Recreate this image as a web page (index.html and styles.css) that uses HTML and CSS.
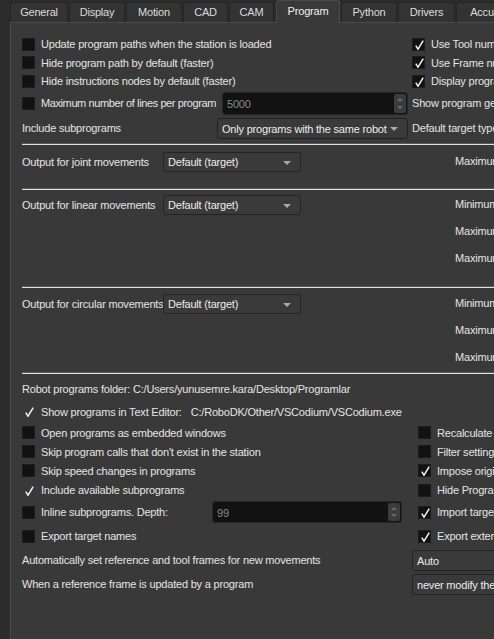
FILE: index.html
```html
<!DOCTYPE html>
<html lang="en">
<head>
    <meta charset="UTF-8">
    <title>Options - Program</title>
    <link rel="stylesheet" href="styles.css">
</head>
<body>
    <!-- tab strip -->
    <div class="tabs">
        <div class="tab" style="width:56px">General</div>
        <div class="tab" style="width:54px">Display</div>
        <div class="tab" style="width:54px">Motion</div>
        <div class="tab" style="width:43px">CAD</div>
        <div class="tab" style="width:43px">CAM</div>
        <div class="tab active" style="width:62px">Program</div>
        <div class="tab" style="width:54px">Python</div>
        <div class="tab" style="width:55px">Drivers</div>
        <div class="tab" style="width:70px">Accuracy</div>
    </div>

    <div class="pane">
        <!-- general program options -->
        <div class="top">
            <div class="cell"><span class="box"></span>Update program paths when the station is loaded</div>
            <div class="cell right"><span class="box on"></span>Use Tool numbers</div>
            <div class="cell"><span class="box"></span>Hide program path by default (faster)</div>
            <div class="cell right"><span class="box on"></span>Use Frame numbers</div>
            <div class="cell"><span class="box"></span>Hide instructions nodes by default (faster)</div>
            <div class="cell right"><span class="box on"></span>Display program</div>
            <div class="cell">
                <span class="box"></span><span class="tight">Maximum number of lines per program</span>
                <div class="spin spin-lines"><span>5000</span><i class="arrows"></i></div>
            </div>
            <div class="cell right">Show program generation</div>
            <div class="cell">
                Include subprograms
                <div class="combo combo-sub">Only programs with the same robot</div>
            </div>
            <div class="cell right">Default target type</div>
        </div>

        <div class="sep"></div>
        <div class="move joint">
            <div class="move-row">
                <span class="move-label">Output for joint movements</span>
                <div class="combo combo-move">Default (target)</div>
            </div>
            <div class="limits">
                <span>Maximum joint</span>
            </div>
        </div>

        <div class="sep"></div>
        <div class="move linear">
            <div class="move-row">
                <span class="move-label">Output for linear movements</span>
                <div class="combo combo-move">Default (target)</div>
            </div>
            <div class="limits">
                <span>Minimum step</span>
                <span>Maximum step</span>
                <span>Maximum angle</span>
            </div>
        </div>

        <div class="sep"></div>
        <div class="move circular">
            <div class="move-row">
                <span class="move-label">Output for circular movements</span>
                <div class="combo combo-move">Default (target)</div>
            </div>
            <div class="limits">
                <span>Minimum step</span>
                <span>Maximum step</span>
                <span>Maximum angle</span>
            </div>
        </div>

        <div class="sep"></div>
        <!-- program files -->
        <div class="line folder">Robot programs folder: C:/Users/yunusemre.kara/Desktop/Programlar</div>
        <div class="line editor">
            <span class="box on plain"></span>Show programs in Text Editor:
            <span class="editor-path">C:/RoboDK/Other/VSCodium/VSCodium.exe</span>
        </div>

        <div class="bottom">
            <div class="cell"><span class="box"></span>Open programs as embedded windows</div>
            <div class="cell right"><span class="box"></span>Recalculate Targets</div>
            <div class="cell"><span class="box"></span>Skip program calls that don't exist in the station</div>
            <div class="cell right"><span class="box"></span>Filter settings</div>
            <div class="cell"><span class="box"></span>Skip speed changes in programs</div>
            <div class="cell right"><span class="box on"></span>Impose original</div>
            <div class="cell"><span class="box on plain"></span>Include available subprograms</div>
            <div class="cell right"><span class="box"></span>Hide Program</div>
            <div class="cell">
                <span class="box"></span>Inline subprograms. Depth:
                <div class="spin spin-depth"><span>99</span><i class="arrows"></i></div>
            </div>
            <div class="cell right"><span class="box on"></span>Import targets</div>
            <div class="cell"><span class="box"></span>Export target names</div>
            <div class="cell right"><span class="box on"></span>Export external</div>
        </div>

        <div class="line frames">
            <span class="wide-label">Automatically set reference and tool frames for new movements</span>
            <div class="combo combo-wide">Auto</div>
        </div>
        <div class="line frames">
            <span class="wide-label">When a reference frame is updated by a program</span>
            <div class="combo combo-wide">never modify the reference</div>
        </div>
    </div>
</body>
</html>
```

FILE: styles.css
```css
body {
    margin: 0;
    width: 494px;
    height: 639px;
    overflow: hidden;
    background: #2c2c2c;
    color: #e4e4e4;
    font-family: 'Liberation Sans', Arial, sans-serif;
    font-size: 11px;
    letter-spacing: -0.2px;
}

/* tab strip */
.tabs {
    display: flex;
    align-items: flex-end;
    height: 22px;
    padding-left: 10px;
    white-space: nowrap;
}
.tab {
    flex: none;
    height: 19px;
    line-height: 19px;
    margin-right: 1px;
    text-align: center;
    background: #333333;
    border: 1px solid #252525;
    border-bottom: none;
    border-radius: 3px 3px 0 0;
    color: #dcdcdc;
}
.tab.active {
    height: 22px;
    line-height: 20px;
    margin: 0 1px -1px 1px;
    background: #393939;
    border-color: #4a4a4a;
    color: #f0f0f0;
    position: relative;
    z-index: 1;
}

.pane {
    margin-left: 10px;
    width: 600px;
    height: 620px;
    background: #393939;
    border-top: 1px solid #4a4a4a;
    border-left: 1px solid #4a4a4a;
    padding-left: 11px;
    white-space: nowrap;
}

.tight {
    letter-spacing: -0.4px;
}

/* checkboxes */
.box {
    flex: none;
    width: 13px;
    height: 13px;
    margin-right: 6px;
    background: #121212;
    border: 1px solid #1c1c1c;
    box-sizing: border-box;
    position: relative;
}
.box.plain {
    background: transparent;
    border-color: transparent;
}
.box.on:after {
    content: '';
    position: absolute;
    left: 2px;
    top: 1px;
    width: 9px;
    height: 10px;
    background: no-repeat center / 9px 10px url("data:image/svg+xml,%3Csvg xmlns='http://www.w3.org/2000/svg' viewBox='0 0 9 10'%3E%3Cpath d='M0.8 5.6 L3 9.2 L8.2 0.6' fill='none' stroke='%23f2f2f2' stroke-width='1.5'/%3E%3C/svg%3E");
}

.cell {
    display: flex;
    align-items: center;
}

/* top grid */
.top {
    display: grid;
    grid-template-columns: 390px 300px;
    grid-template-rows: 18px 19px 18px 26px 24px;
    padding-top: 12px;
    padding-bottom: 3px;
}

/* combo boxes and spin boxes */
.combo {
    flex: none;
    height: 21px;
    line-height: 20px;
    box-sizing: border-box;
    padding-left: 4px;
    background: #3a3a3a;
    border: 1px solid #232323;
    border-radius: 3px;
    position: relative;
    color: #ececec;
}
.combo:after {
    content: '';
    position: absolute;
    right: 9px;
    top: 8px;
    border-left: 4px solid transparent;
    border-right: 4px solid transparent;
    border-top: 4px solid #a8a8a8;
}
.combo-sub {
    width: 191px;
    margin-left: auto;
    margin-right: 4px;
}
.combo-move {
    width: 138px;
    height: 20px;
    line-height: 19px;
}
.combo-wide {
    width: 200px;
}
.combo-wide:after {
    display: none;
}

.spin {
    flex: none;
    height: 23px;
    line-height: 22px;
    box-sizing: border-box;
    padding-left: 4px;
    background: #121212;
    border: 1px solid #262626;
    border-radius: 3px;
    color: #8a8a8a;
    position: relative;
}
.spin-lines {
    width: 186px;
    margin-left: auto;
    margin-right: 4px;
}
.spin-depth {
    width: 190px;
    margin-left: auto;
    margin-right: 16px;
    height: 22px;
}
.arrows {
    position: absolute;
    right: 1px;
    top: 1px;
    bottom: 1px;
    width: 12px;
    background: #3c3c3c;
    border-radius: 2px;
}
.arrows:before,
.arrows:after {
    content: '';
    position: absolute;
    left: 3px;
    border-left: 3px solid transparent;
    border-right: 3px solid transparent;
}
.arrows:before {
    top: 4px;
    border-bottom: 3px solid #6a6a6a;
}
.arrows:after {
    bottom: 4px;
    border-top: 3px solid #6a6a6a;
}

/* section lines */
.sep {
    height: 1px;
    background: #e0e0e0;
    border-top: 1px solid #5a5a5a;
}

/* movement output sections */
.move {
    display: flex;
    align-items: flex-start;
}
.move-row {
    display: flex;
    align-items: center;
    width: 433px;
    height: 27px;
}
.move-label {
    width: 141px;
}
.limits {
    display: flex;
    flex-direction: column;
}
.limits span {
    height: 27px;
    line-height: 27px;
}
.joint {
    height: 40px;
    padding-top: 3px;
}
.linear {
    height: 95px;
    padding-top: 1px;
}
.circular {
    height: 82px;
    padding-top: 2px;
}

/* files and editor */
.line {
    display: flex;
    align-items: center;
}
.folder {
    height: 22px;
    margin-top: 4px;
}
.editor {
    height: 23px;
}
.editor-path {
    margin-left: 9px;
}

.bottom {
    display: grid;
    grid-template-columns: 396px 300px;
    grid-template-rows: 19px 19px 19px 20px 24px 24px;
}

.frames {
    height: 24px;
}
.wide-label {
    width: 390px;
}
```
